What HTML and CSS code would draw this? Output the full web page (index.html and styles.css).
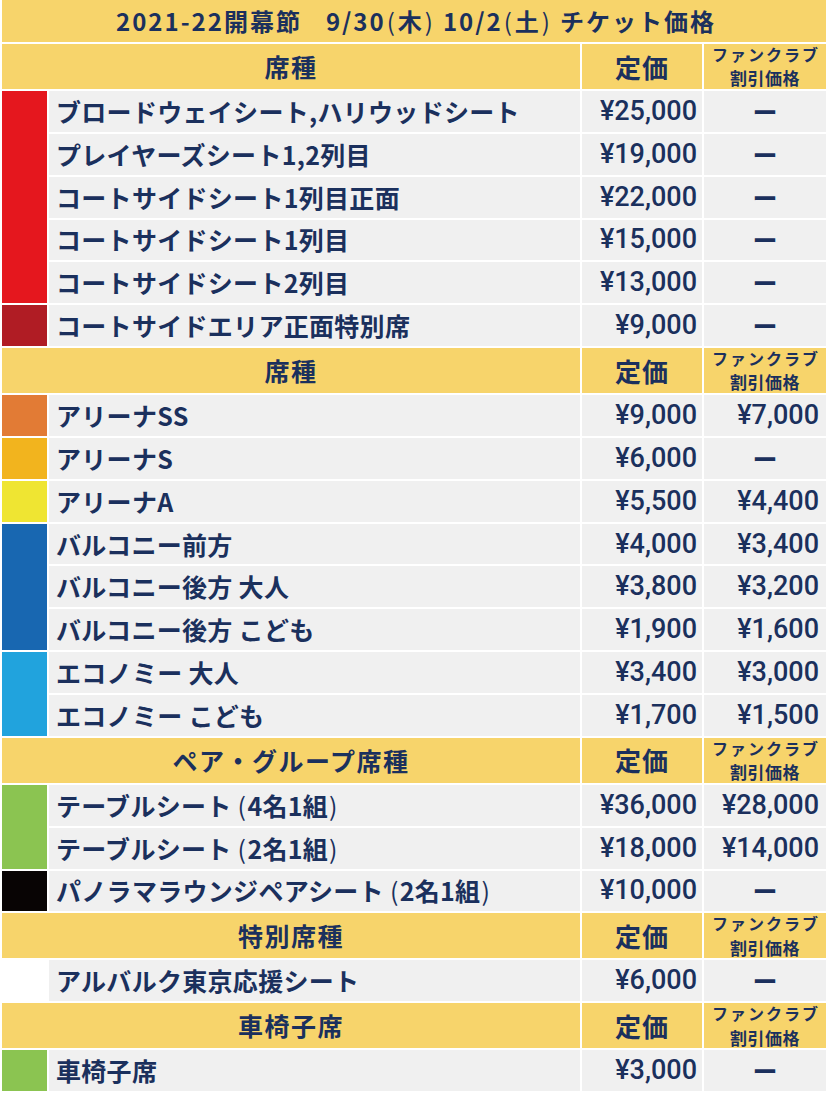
FILE: index.html
```html
<!DOCTYPE html>
<html lang="ja">
<head>
<meta charset="utf-8">
<title>2021-22開幕節 チケット価格</title>
<link rel="stylesheet" href="styles.css">
</head>
<body>
<div class="sheet">
  <div class="title"><span>2021-22開幕節</span><span class="gap-wide"></span><span>9/30<span class="paren">(</span>木<span class="paren">)</span></span><span class="gap"></span><span>10/2<span class="paren">(</span>土<span class="paren">)</span></span><span class="gap"></span><span>チケット価格</span></div>

  <div class="head head-seat">席種</div>
  <div class="head head-price">定価</div>
  <div class="head head-fan"><span class="fan1">ファンクラブ</span><span class="fan2">割引価格</span></div>

  <div class="swatch c-red span5"></div>
  <div class="name">ブロードウェイシート,ハリウッドシート</div><div class="price">¥25,000</div><div class="fan"><span class="dash">ー</span></div>
  <div class="name">プレイヤーズシート1,2列目</div><div class="price">¥19,000</div><div class="fan"><span class="dash">ー</span></div>
  <div class="name">コートサイドシート1列目正面</div><div class="price">¥22,000</div><div class="fan"><span class="dash">ー</span></div>
  <div class="name">コートサイドシート1列目</div><div class="price">¥15,000</div><div class="fan"><span class="dash">ー</span></div>
  <div class="name">コートサイドシート2列目</div><div class="price">¥13,000</div><div class="fan"><span class="dash">ー</span></div>
  <div class="swatch c-darkred"></div>
  <div class="name">コートサイドエリア正面特別席</div><div class="price">¥9,000</div><div class="fan"><span class="dash">ー</span></div>

  <div class="head head-seat">席種</div>
  <div class="head head-price">定価</div>
  <div class="head head-fan"><span class="fan1">ファンクラブ</span><span class="fan2">割引価格</span></div>

  <div class="swatch c-orange"></div>
  <div class="name">アリーナSS</div><div class="price">¥9,000</div><div class="fan">¥7,000</div>
  <div class="swatch c-amber"></div>
  <div class="name">アリーナS</div><div class="price">¥6,000</div><div class="fan"><span class="dash">ー</span></div>
  <div class="swatch c-lemon"></div>
  <div class="name">アリーナA</div><div class="price">¥5,500</div><div class="fan">¥4,400</div>
  <div class="swatch c-blue span3"></div>
  <div class="name">バルコニー前方</div><div class="price">¥4,000</div><div class="fan">¥3,400</div>
  <div class="name">バルコニー後方 大人</div><div class="price">¥3,800</div><div class="fan">¥3,200</div>
  <div class="name">バルコニー後方 こども</div><div class="price">¥1,900</div><div class="fan">¥1,600</div>
  <div class="swatch c-sky span2"></div>
  <div class="name">エコノミー 大人</div><div class="price">¥3,400</div><div class="fan">¥3,000</div>
  <div class="name">エコノミー こども</div><div class="price">¥1,700</div><div class="fan">¥1,500</div>

  <div class="head head-seat">ペア・グループ席種</div>
  <div class="head head-price">定価</div>
  <div class="head head-fan"><span class="fan1">ファンクラブ</span><span class="fan2">割引価格</span></div>

  <div class="swatch c-green span2"></div>
  <div class="name">テーブルシート<span class="paren lead">(</span>4名1組<span class="paren">)</span></div><div class="price">¥36,000</div><div class="fan">¥28,000</div>
  <div class="name">テーブルシート<span class="paren lead">(</span>2名1組<span class="paren">)</span></div><div class="price">¥18,000</div><div class="fan">¥14,000</div>
  <div class="swatch c-black"></div>
  <div class="name">パノラマラウンジペアシート<span class="paren lead">(</span>2名1組<span class="paren">)</span></div><div class="price">¥10,000</div><div class="fan"><span class="dash">ー</span></div>

  <div class="head head-seat">特別席種</div>
  <div class="head head-price">定価</div>
  <div class="head head-fan"><span class="fan1">ファンクラブ</span><span class="fan2">割引価格</span></div>

  <div class="swatch c-white"></div>
  <div class="name">アルバルク東京応援シート</div><div class="price">¥6,000</div><div class="fan"><span class="dash">ー</span></div>

  <div class="head head-seat">車椅子席</div>
  <div class="head head-price">定価</div>
  <div class="head head-fan"><span class="fan1">ファンクラブ</span><span class="fan2">割引価格</span></div>

  <div class="swatch c-green"></div>
  <div class="name">車椅子席</div><div class="price">¥3,000</div><div class="fan"><span class="dash">ー</span></div>
</div>
</body>
</html>
```

FILE: styles.css
```css
html, body {
  margin: 0;
  padding: 0;
  background: #ffffff;
}

body {
  width: 828px;
  color: #1b305d;
  font-family: "Noto Sans CJK JP", "Noto Sans", sans-serif;
}

.sheet {
  display: grid;
  grid-template-columns: 45px 531px 120px 122px;
  gap: 2px;
  padding: 0 2px;
  background: #ffffff;
}

.title {
  grid-column: 1 / -1;
  height: 42px;
  background: #f7d46b;
  display: flex;
  align-items: center;
  justify-content: center;
  padding-left: 4px;
  font-size: 24px;
  font-weight: 700;
  letter-spacing: 2px;
  line-height: 1;
}

.gap-wide {
  width: 24px;
}

.gap {
  width: 7px;
}

.paren {
  display: inline-block;
  font-weight: 400;
  margin: 0 1px;
}

.paren.lead {
  margin-left: 6px;
}

.head {
  height: 45px;
  background: #f7d46b;
  display: flex;
  align-items: center;
  justify-content: center;
  font-weight: 700;
  line-height: 1;
}

.head-seat {
  grid-column: 1 / 3;
  font-size: 25px;
  letter-spacing: 1.5px;
}

.head-price {
  font-size: 26px;
  letter-spacing: 1px;
}

.head-fan {
  flex-direction: column;
  gap: 0;
}

.fan1 {
  font-size: 16px;
  line-height: 23.5px;
  letter-spacing: 2px;
  margin-right: -2px;
  margin-top: 1px;
}

.fan2 {
  font-size: 17px;
  line-height: 24.7px;
  letter-spacing: 0.5px;
}

.swatch {
  align-self: stretch;
}

.span2 { grid-row: span 2; }
.span3 { grid-row: span 3; }
.span5 { grid-row: span 5; }

.c-red { background: #e5171e; }
.c-darkred { background: #b01c24; }
.c-orange { background: #e27b35; }
.c-amber { background: #f2b41e; }
.c-lemon { background: #efe532; }
.c-blue { background: #1867b1; }
.c-sky { background: #21a3dd; }
.c-green { background: #8bc451; }
.c-black { background: #080404; }
.c-white { background: #ffffff; }

.name,
.price,
.fan {
  height: 40.85px;
  background: #f0f0f0;
  display: flex;
  align-items: center;
  line-height: 1;
}

.name {
  padding-left: 7px;
  font-size: 25px;
  font-weight: 700;
  letter-spacing: 0.3px;
}

.price,
.fan {
  justify-content: flex-end;
  font-family: "Roboto", "Liberation Sans", sans-serif;
  font-size: 27px;
  font-weight: 500;
}

.price {
  padding-right: 5px;
}

.fan {
  padding-right: 7px;
}

.dash {
  flex: 1;
  text-align: center;
  font-family: "Noto Sans CJK JP", sans-serif;
  font-weight: 700;
  font-size: 25px;
  margin-right: -7px;
}
```
